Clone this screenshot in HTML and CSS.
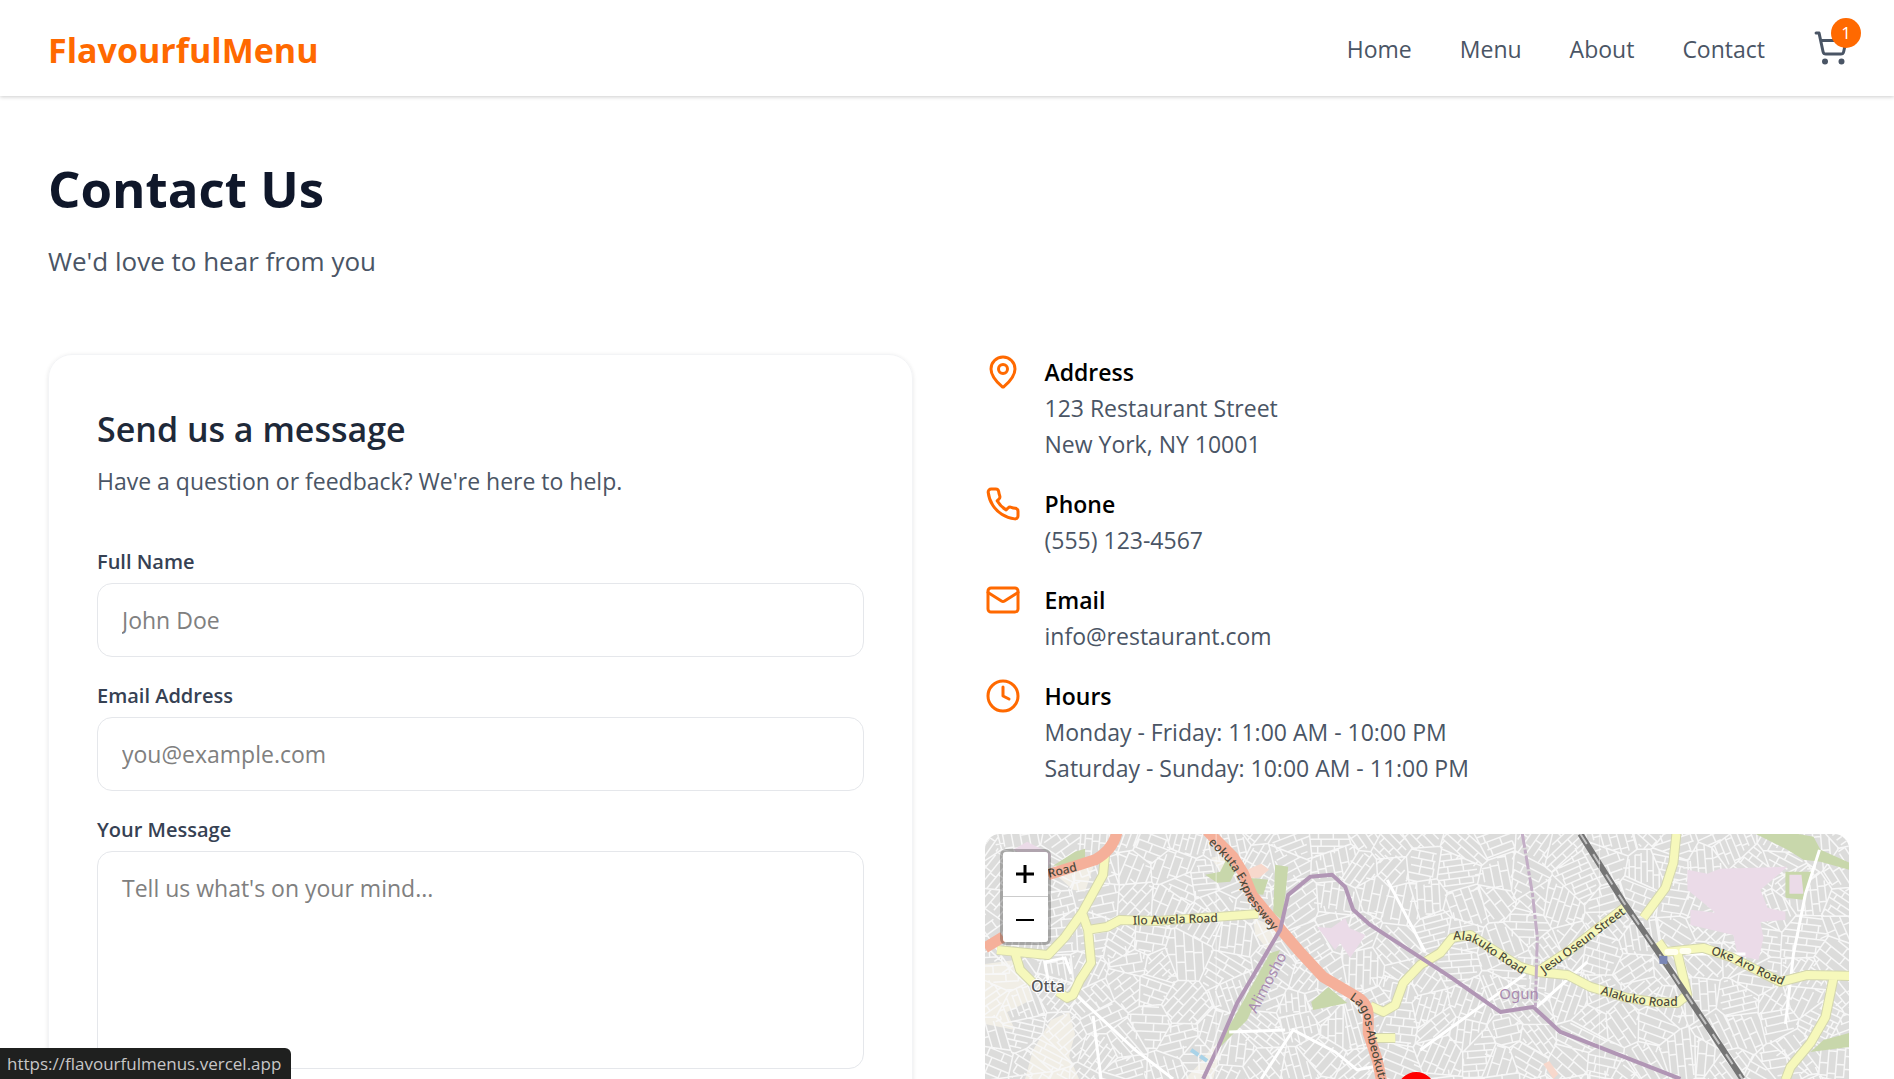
FILE: index.html
```html
<!DOCTYPE html>
<html lang="en">
<head>
<meta charset="utf-8">
<meta name="viewport" content="width=device-width, initial-scale=1">
<title>FlavourfulMenu</title>
<link rel="stylesheet" href="styles.css">
</head>
<body>
<header class="site-header">
  <a class="brand" href="#">FlavourfulMenu</a>
  <nav class="site-nav">
    <a class="nav-link" href="#">Home</a>
    <a class="nav-link" href="#">Menu</a>
    <a class="nav-link" href="#">About</a>
    <a class="nav-link" href="#">Contact</a>
    <a class="cart" href="#">
      <svg class="icon" viewBox="0 0 24 24"><circle cx="8" cy="21" r="1"/><circle cx="19" cy="21" r="1"/><path d="M2.05 2.05h2l2.66 12.42a2 2 0 0 0 2 1.58h9.78a2 2 0 0 0 1.95-1.57l1.65-7.43H5.12"/></svg>
      <span class="cart-count">1</span>
    </a>
  </nav>
</header>

<main class="page">
  <h1 class="page-title">Contact Us</h1>
  <p class="page-lead">We'd love to hear from you</p>

  <div class="columns">
    <form class="card">
      <h2 class="card-title">Send us a message</h2>
      <p class="card-text">Have a question or feedback? We're here to help.</p>
      <div class="field">
        <label for="name">Full Name</label>
        <input id="name" type="text" placeholder="John Doe">
      </div>
      <div class="field">
        <label for="email">Email Address</label>
        <input id="email" type="email" placeholder="you@example.com">
      </div>
      <div class="field">
        <label for="message">Your Message</label>
        <textarea id="message" rows="5" placeholder="Tell us what's on your mind..."></textarea>
      </div>
    </form>

    <div class="details">
      <ul class="info">
        <li class="info-item">
          <svg class="icon" viewBox="0 0 24 24"><path d="M20 10c0 4.993-5.539 10.193-7.399 11.799a1 1 0 0 1-1.202 0C9.539 20.193 4 14.993 4 10a8 8 0 0 1 16 0"/><circle cx="12" cy="10" r="3"/></svg>
          <div><h3>Address</h3><p>123 Restaurant Street<br>New York, NY 10001</p></div>
        </li>
        <li class="info-item">
          <svg class="icon" viewBox="0 0 24 24"><path d="M22 16.92v3a2 2 0 0 1-2.18 2 19.79 19.79 0 0 1-8.63-3.07 19.5 19.5 0 0 1-6-6 19.79 19.79 0 0 1-3.07-8.67A2 2 0 0 1 4.11 2h3a2 2 0 0 1 2 1.72 12.84 12.84 0 0 0 .7 2.81 2 2 0 0 1-.45 2.11L8.09 9.91a16 16 0 0 0 6 6l1.27-1.27a2 2 0 0 1 2.11-.45 12.84 12.84 0 0 0 2.81.7A2 2 0 0 1 22 16.92z"/></svg>
          <div><h3>Phone</h3><p>(555) 123-4567</p></div>
        </li>
        <li class="info-item">
          <svg class="icon" viewBox="0 0 24 24"><rect width="20" height="16" x="2" y="4" rx="2"/><path d="m22 7-8.97 5.7a1.94 1.94 0 0 1-2.06 0L2 7"/></svg>
          <div><h3>Email</h3><p>info@restaurant.com</p></div>
        </li>
        <li class="info-item">
          <svg class="icon" viewBox="0 0 24 24"><circle cx="12" cy="12" r="10"/><path d="M12 6v6l4 2"/></svg>
          <div><h3>Hours</h3><p>Monday - Friday: 11:00 AM - 10:00 PM<br>Saturday - Sunday: 10:00 AM - 11:00 PM</p></div>
        </li>
      </ul>

      <div class="map">
        <svg class="map-canvas" viewBox="0 0 864 600" preserveAspectRatio="xMidYMid slice">
          <rect class="ground" width="864" height="600"/>
          <g class="open-land">
            <path d="M0 130L30 126 48 165 22 178 30 196 0 190Z"/>
            <path d="M66 186L84 178 90 200 84 222 94 245H40L48 216Z"/>
            <path d="M72 42L110 28 100 58 88 56Z"/>
            <path d="M268 84L288 92 296 98 284 118 270 100Z"/>
            <path d="M226 214L238 206 228 245H200L214 230Z"/>
            <path d="M226 24L246 20 250 40 236 40Z"/>
          </g>
          <g class="street-net" id="streets"></g>
          <g class="park">
            <path d="M220 41L235 38 242 24 252 34 245 48 232 49Z"/>
            <path d="M263 44L283 46 278 61 268 60Z"/>
            <path d="M290 31L303 33 300 63 297 86 288 79Z"/>
            <path d="M285 119L295 116 262 186 232 216 242 196Z"/>
            <path d="M343 153L362 169 328 176 326 168Z"/>
            <path d="M90 18L100 15 100 26 84 32 68 32Z"/>
            <path d="M770 0H812L828 3 835 16 864 29V36L835 28 818 26 802 16Z"/>
            <path d="M800 38H828L817 66 800 64Z"/>
            <path d="M838 206L864 199V213L825 218Z"/>
          </g>
          <g class="campus">
            <path d="M702 36L722 40 734 35 802 33 788 45 775 56 782 74 800 78V86L775 88 778 104 773 126 752 121 748 101 705 91V76L730 79 702 56Z"/>
            <path d="M332 93L346 94 360 84 364 94 380 101 365 124 355 109 350 116Z"/>
            <path d="M28 16L42 8 66 20 64 32Z"/>
            <path d="M804 41H816L818 60H804Z"/>
          </g>
          <path class="retail" d="M558 230L564 227 573 240 568 245ZM262 36L276 30 284 36 274 44 264 44Z"/>
          <path class="water" d="M206 216L222 227"/>
          <g class="lane">
            <path d="M92 162L120 188 150 216 188 245M108 182L116 245M276 245L308 196 350 218 372 236 392 232M244 198L300 196M63 146L60 128 80 124 86 140M402 46L440 118M834 16L820 60 808 120 800 190M435 216L540 140M602 128L548 176M700 120L760 120"/>
          </g>
          <g class="road-edge">
            <path d="M120 21L118 41 97 79 80 103 63 121 32 118 12 116M97 79L103 96 106 129 95 146 88 161 82 164 73 158M30 119L35 136 48 149M103 96L122 93 135 86 172 87 232 83 273 80"/>
            <path d="M385 172L398 178 410 171 418 149 435 131 455 119 467 104 485 101 505 114 535 133 552 138 582 141 605 153 642 164 668 168 692 169 702 161 692 119M552 138L585 116 640 73M691 0L688 29 680 54 658 84M673 108L680 118 718 114 745 123 775 138 795 148 822 141 865 142M848 144L840 183 825 209 805 233 800 246M386 204H410"/>
          </g>
          <g class="road">
            <path d="M120 21L118 41 97 79 80 103 63 121 32 118 12 116M97 79L103 96 106 129 95 146 88 161 82 164 73 158M30 119L35 136 48 149M103 96L122 93 135 86 172 87 232 83 273 80"/>
            <path d="M385 172L398 178 410 171 418 149 435 131 455 119 467 104 485 101 505 114 535 133 552 138 582 141 605 153 642 164 668 168 692 169 702 161 692 119M552 138L585 116 640 73M691 0L688 29 680 54 658 84M673 108L680 118 718 114 745 123 775 138 795 148 822 141 865 142M848 144L840 183 825 209 805 233 800 246M386 204H410"/>
          </g>
          <path class="highlight" d="M682 118H690M697 117H703"/>
          <path class="trunk" d="M132 -2Q128 16 110 26L63 41M18 103L0 114"/>
          <path class="trunk" d="M222 -3L248 23 258 39 267 61 285 83 313 116 338 143 372 163Q383 170 383 182V199L392 226 397 250"/>
          <path class="border" d="M218 245L233 213 252 169 295 96 303 61 325 43 347 41 360 53 368 76 385 91 465 143 515 178 548 173 575 198 695 245"/>
          <path class="border border-minor" d="M537 0L547 59 552 103 550 173"/>
          <path class="rail" d="M595 0L638 68 680 129 757 245"/>
          <path class="rail-dash" d="M595 0L638 68 680 129 757 245"/>
          <rect class="station" x="674" y="122" width="8" height="8"/>
          <path class="seam" d="M231 0V600M614 0V600"/>
          <defs>
            <path id="lane-express" d="M223 9L243 29 253 45 262 66 280 88 300 112"/>
            <path id="lane-lagos" d="M364 165Q379 174 380 190L383 206 396 256"/>
            <path id="lane-alakuko-a" d="M468 106Q486 104 502 118L542 144"/>
            <path id="lane-alakuko-b" d="M615 160L642 168 668 172 704 172"/>
            <path id="lane-jesu" d="M559 140L588 119 652 71"/>
            <path id="lane-oke" d="M725 120L745 127 775 142 810 157"/>
          </defs>
          <g class="road-label">
            <text x="64" y="44" transform="rotate(-14 64 44)">Road</text>
            <text x="148" y="91" transform="rotate(-2 148 91)">Ilo Awela Road</text>
            <text><textPath href="#lane-express">eokuta Expressway</textPath></text>
            <text><textPath href="#lane-lagos">Lagos-Abeokuta</textPath></text>
            <text><textPath href="#lane-alakuko-a">Alakuko Road</textPath></text>
            <text><textPath href="#lane-alakuko-b">Alakuko Road</textPath></text>
            <text><textPath href="#lane-jesu">Jesu Oseun Street</textPath></text>
            <text><textPath href="#lane-oke">Oke Aro Road</textPath></text>
          </g>
          <text class="place-label" x="46" y="158">Otta</text>
          <text class="area-label" x="514" y="165">Ogun</text>
          <text class="area-label" x="271" y="180" transform="rotate(-62 271 180)">Alimosho</text>
          <path class="pin" d="M431 299C425 280 412 270 412 257A19 19 0 1 1 450 257C450 270 437 280 431 299Z"/>
        </svg>
        <div class="zoom-control">
          <button type="button" aria-label="Zoom in"><svg viewBox="0 0 18 18"><path d="M9 0V18M0 9H18"/></svg></button>
          <button type="button" aria-label="Zoom out"><svg viewBox="0 0 18 18"><path d="M0 9H18"/></svg></button>
        </div>
      </div>
    </div>
  </div>
</main>

<div class="link-status">https://flavourfulmenus.vercel.app</div>
<script src="streets.js"></script>
</body>
</html>
```
FILE: styles.css
```css
* { box-sizing: border-box; margin: 0; }

body {
  height: 100vh;
  overflow: hidden;
  background: #fff;
  color: #000;
  font: 23px/36px "Open Sans", "Noto Sans", sans-serif;
}

a { color: inherit; text-decoration: none; }

.icon {
  display: block;
  flex: none;
  width: 36px;
  height: 36px;
  fill: none;
  stroke: currentColor;
  stroke-width: 2;
  stroke-linecap: round;
  stroke-linejoin: round;
}

/* Header */
.site-header {
  display: flex;
  align-items: center;
  justify-content: space-between;
  height: 96px;
  padding: 0 45px 0 48px;
  box-shadow: 0 1px 4px rgba(0, 0, 0, .2);
}
.brand { padding-top: 4px; color: #ff6900; font-size: 34px; font-weight: 700; line-height: 48px; }
.site-nav { display: flex; align-items: center; gap: 48px; color: #4a5565; }
.nav-link { padding-top: 2px; }
.cart { position: relative; }
.cart-count {
  position: absolute;
  top: -12px;
  right: -12px;
  width: 30px;
  height: 30px;
  border-radius: 50%;
  background: #ff6900;
  color: #fff;
  font-size: 17px;
  line-height: 30px;
  text-align: center;
}

/* Page */
.page { padding: 62px 45px 72px 48px; }
.page-title { color: #0f172a; font-size: 51px; font-weight: 700; line-height: 60px; }
.page-lead { margin-top: 22px; color: #4a5565; font-size: 26px; line-height: 42px; }
.columns {
  display: grid;
  grid-template-columns: 1fr 1fr;
  align-items: start;
  gap: 72px;
  margin-top: 72px;
}

/* Message form */
.card {
  padding: 48px;
  border: 1px solid #f3f4f6;
  border-radius: 24px;
  box-shadow: 0 1px 4px rgba(0, 0, 0, .1);
}
.card-title { color: #1e2939; font-size: 34px; font-weight: 600; line-height: 52px; }
.card-text { margin: 8px 0 48px; color: #4a5565; }
.field { margin-bottom: 24px; }
.field label { display: block; margin-bottom: 6px; color: #364153; font-size: 20px; font-weight: 600; line-height: 30px; }
.field input, .field textarea {
  display: block;
  width: 100%;
  padding: 18px 24px;
  border: 1px solid #e5e7eb;
  border-radius: 15px;
  background: #fff;
  color: inherit;
  font: inherit;
  resize: none;
}
.field input { height: 74px; }
.field textarea { height: 218px; }
::placeholder { color: #808080; opacity: 1; }

/* Contact details */
.info { display: grid; gap: 24px; padding: 0; list-style: none; }
.info-item { display: flex; gap: 24px; color: #4a5565; }
.info-item .icon { color: #ff6900; }
.info-item h3 { color: #000; font-size: 23px; font-weight: 600; line-height: 36px; }

/* Map */
.map {
  position: relative;
  height: 600px;
  margin-top: 48px;
  overflow: hidden;
  border-radius: 15px;
}
.map-canvas { display: block; width: 100%; height: 100%; }
.ground { fill: #dcdcdb; }
.open-land { fill: #f1eee6; }
.street-net { fill: none; stroke: #f7f7f7; stroke-width: 1.5; }
.park { fill: #c8d7ab; }
.campus { fill: #ebdbe8; }
.retail { fill: #f7d8cc; }
.water { stroke: #a9d3e8; stroke-width: 4; stroke-dasharray: 9 2; }
.lane { fill: none; stroke: #fff; stroke-width: 3; }
.road, .road-edge, .trunk, .border { fill: none; stroke-linejoin: round; }
.road-edge { stroke: #d3d6ae; stroke-width: 10; }
.road { stroke: #f6f8bb; stroke-width: 8; }
.highlight { stroke: #fffff0; stroke-width: 6; stroke-linecap: round; }
.trunk { stroke: #f5b09a; stroke-width: 11; }
.border { stroke: #b196b5; stroke-width: 4; }
.border-minor { stroke: #c3aec6; stroke-width: 3; stroke-dasharray: 14 2 4 2; }
.rail { fill: none; stroke: #757575; stroke-width: 6; }
.rail-dash { fill: none; stroke: #c4c4c4; stroke-width: 2; stroke-dasharray: 12 12; }
.station { fill: #7986b5; }
.seam { stroke: #fff; stroke-opacity: .5; }
.road-label { fill: #4d4a3c; font: 500 12px "Noto Sans", sans-serif; }
.place-label { fill: #555; font: 500 16px "Noto Sans", sans-serif; stroke: #fff; stroke-width: 2; paint-order: stroke; }
.area-label { fill: #a98bb0; font: 15px "Noto Sans", sans-serif; }
.pin { fill: #f00; }

.zoom-control {
  position: absolute;
  top: 15px;
  left: 15px;
  border: 3px solid rgba(0, 0, 0, .25);
  border-radius: 6px;
  background-clip: padding-box;
}
.zoom-control button {
  display: grid;
  place-items: center;
  width: 45px;
  height: 45px;
  padding: 0;
  border: 0;
  border-radius: 0 0 3px 3px;
  background: #fff;
}
.zoom-control button:first-child { border-bottom: 1px solid #ccc; border-radius: 3px 3px 0 0; }
.zoom-control svg { width: 18px; height: 18px; stroke: #000; stroke-width: 2; }
.zoom-control button:first-child svg { stroke-width: 3; }

/* Link address shown by the browser */
.link-status {
  position: fixed;
  bottom: 0;
  left: 0;
  height: 31px;
  padding: 0 10px 0 7px;
  border-radius: 0 6px 0 0;
  background: #1f201f;
  color: #c7c7c7;
  font-size: 17px;
  line-height: 32px;
}
```
FILE: streets.js
```js
// Draws the side streets: the map is cut into districts, each with its own street direction.
(function () {
  var seed = 11;
  function random() {
    seed = (seed * 16807) % 2147483647;
    return seed / 2147483647;
  }

  var sites = [];
  for (var gy = -10; gy < 300; gy += 32) {
    for (var gx = -10; gx < 890; gx += 34) {
      sites.push([gx + random() * 30, gy + random() * 28]);
    }
  }

  // Keeps the part of a polygon that is nearer to site a than to site b.
  function cut(poly, a, b) {
    var nx = b[0] - a[0], ny = b[1] - a[1];
    var limit = (b[0] * b[0] + b[1] * b[1] - a[0] * a[0] - a[1] * a[1]) / 2;
    var out = [];
    poly.forEach(function (p, i) {
      var q = poly[(i + 1) % poly.length];
      var dp = p[0] * nx + p[1] * ny - limit, dq = q[0] * nx + q[1] * ny - limit;
      if (dp <= 0) out.push(p);
      if (dp * dq < 0) {
        var t = dp / (dp - dq);
        out.push([p[0] + (q[0] - p[0]) * t, p[1] + (q[1] - p[1]) * t]);
      }
    });
    return out;
  }

  // Span of a line (point o, direction d) inside a convex polygon.
  function span(poly, o, d) {
    var hits = [];
    poly.forEach(function (p, i) {
      var q = poly[(i + 1) % poly.length];
      var ex = q[0] - p[0], ey = q[1] - p[1];
      var det = d[0] * ey - d[1] * ex;
      if (Math.abs(det) < 1e-6) return;
      var t = ((p[0] - o[0]) * ey - (p[1] - o[1]) * ex) / det;
      var u = ((p[0] - o[0]) * d[1] - (p[1] - o[1]) * d[0]) / det;
      if (u >= 0 && u <= 1) hits.push(t);
    });
    return hits.length > 1 ? [Math.min.apply(null, hits), Math.max.apply(null, hits)] : null;
  }

  function point(x, y) { return x.toFixed(1) + ' ' + y.toFixed(1); }

  var path = '';
  sites.forEach(function (s) {
    var poly = [[-60, -60], [930, -60], [930, 340], [-60, 340]];
    sites.forEach(function (o) {
      if (o !== s && Math.hypot(o[0] - s[0], o[1] - s[1]) < 110) poly = cut(poly, s, o);
    });
    path += 'M' + poly.map(function (p) { return point(p[0], p[1]); }).join('L') + 'Z';
    var angle = random() * Math.PI, dx = Math.cos(angle), dy = Math.sin(angle);
    var step = 6 + random() * 3;
    for (var k = -5; k <= 5; k++) {
      var o = [s[0] - dy * k * step, s[1] + dx * k * step];
      var r = span(poly, o, [dx, dy]);
      if (!r) continue;
      var from = r[0] + (random() < .3 ? 4 : 0), to = r[1] - (random() < .3 ? 4 : 0);
      path += 'M' + point(o[0] + dx * from, o[1] + dy * from) + 'L' + point(o[0] + dx * to, o[1] + dy * to);
      for (var t = from + random() * 16; t < to; t += 12 + random() * 12) {
        path += 'M' + point(o[0] + dx * t, o[1] + dy * t) + 'l' + point(-dy * step, dx * step);
      }
    }
  });

  var streets = document.createElementNS('http://www.w3.org/2000/svg', 'path');
  streets.setAttribute('d', path);
  document.getElementById('streets').appendChild(streets);
})();
```
